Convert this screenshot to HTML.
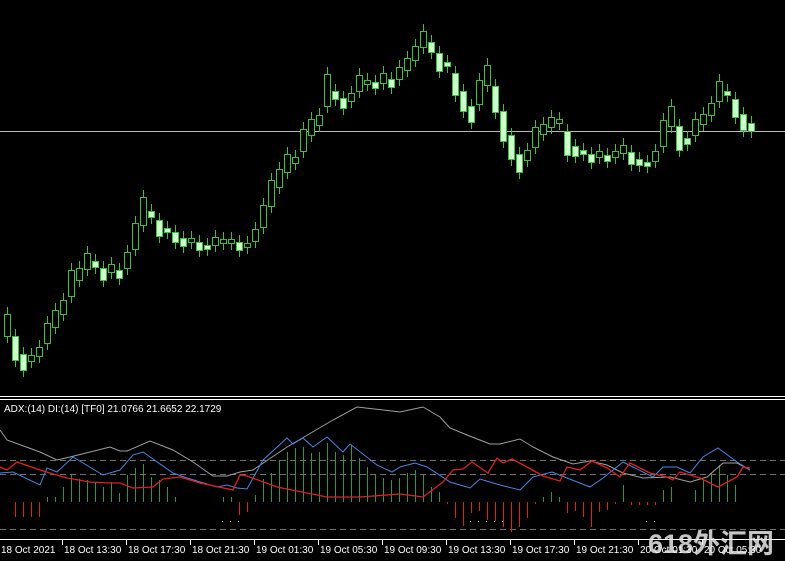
<!DOCTYPE html>
<html><head><meta charset="utf-8"><style>
html,body{margin:0;padding:0;background:#000;width:785px;height:561px;overflow:hidden}
svg{display:block}
text{font-family:"Liberation Sans",sans-serif;font-size:10px;fill:#fff}
</style></head><body>
<svg width="785" height="561" xmlns="http://www.w3.org/2000/svg">
<rect width="785" height="561" fill="#000"/>
<line x1="0" y1="131.5" x2="785" y2="131.5" stroke="#b8b8b8"/>
<path fill="none" stroke="#3fbf3f" d="M7.5,307V343M15.5,329V367M23.5,347V377M31.5,348V368M39.5,340V363M47.5,316V350M55.5,303V334M63.5,293V321M71.5,263V303M79.5,261V287M87.5,246V276M95.5,254V274M103.5,261V287M111.5,257V279M119.5,263V285M127.5,245V275M135.5,216V256M143.5,190V232M151.5,204V224M159.5,213V243M167.5,221V239M175.5,225V249M183.5,231V253M191.5,231V249M199.5,235V257M207.5,238V256M215.5,230V252M223.5,232V250M231.5,232V250M239.5,235V257M247.5,236V254M255.5,222V248M263.5,198V234M271.5,173V213M279.5,162V194M287.5,147V179M295.5,150V170M303.5,122V158M311.5,112V142M319.5,108V132M327.5,67V113M335.5,84V106M343.5,91V115M351.5,86V108M359.5,68V98M367.5,73V91M375.5,75V95M383.5,66V90M391.5,72V94M399.5,60V86M407.5,51V77M415.5,39V67M423.5,24V54M431.5,35V59M439.5,46V78M447.5,55V73M455.5,66V102M463.5,84V118M471.5,99V129M479.5,73V111M487.5,58V92M495.5,79V119M503.5,104V148M511.5,128V166M519.5,147V179M527.5,143V167M535.5,120V154M543.5,117V141M551.5,110V134M559.5,112V130M567.5,124V162M575.5,139V163M583.5,143V161M591.5,147V169M599.5,144V164M607.5,148V168M615.5,144V164M623.5,138V160M631.5,145V171M639.5,152V172M647.5,155V173M655.5,144V168M663.5,113V153M671.5,99V133M679.5,119V157M687.5,131V151M695.5,112V142M703.5,107V131M711.5,96V122M719.5,74V108M727.5,84V102M735.5,92V124M743.5,107V137M751.5,116V138"/>
<g fill="#000" stroke="#3fbf3f">
<rect x="4.5" y="314.5" width="6" height="22"/><rect x="28.5" y="355.5" width="6" height="6"/><rect x="36.5" y="347.5" width="6" height="9"/><rect x="44.5" y="323.5" width="6" height="20"/><rect x="52.5" y="310.5" width="6" height="17"/><rect x="60.5" y="300.5" width="6" height="14"/><rect x="68.5" y="270.5" width="6" height="26"/><rect x="76.5" y="268.5" width="6" height="12"/><rect x="84.5" y="253.5" width="6" height="16"/><rect x="108.5" y="264.5" width="6" height="8"/><rect x="124.5" y="252.5" width="6" height="16"/><rect x="132.5" y="223.5" width="6" height="26"/><rect x="140.5" y="197.5" width="6" height="28"/><rect x="188.5" y="238.5" width="6" height="4"/><rect x="212.5" y="237.5" width="6" height="8"/><rect x="220.5" y="239.5" width="6" height="4"/><rect x="228.5" y="239.5" width="6" height="4"/><rect x="244.5" y="243.5" width="6" height="4"/><rect x="252.5" y="229.5" width="6" height="12"/><rect x="260.5" y="205.5" width="6" height="22"/><rect x="268.5" y="180.5" width="6" height="26"/><rect x="276.5" y="169.5" width="6" height="18"/><rect x="284.5" y="154.5" width="6" height="18"/><rect x="292.5" y="157.5" width="6" height="6"/><rect x="300.5" y="129.5" width="6" height="22"/><rect x="308.5" y="119.5" width="6" height="16"/><rect x="316.5" y="115.5" width="6" height="10"/><rect x="324.5" y="74.5" width="6" height="32"/><rect x="348.5" y="93.5" width="6" height="8"/><rect x="356.5" y="75.5" width="6" height="16"/><rect x="364.5" y="80.5" width="6" height="4"/><rect x="380.5" y="73.5" width="6" height="10"/><rect x="396.5" y="67.5" width="6" height="12"/><rect x="404.5" y="58.5" width="6" height="12"/><rect x="412.5" y="46.5" width="6" height="14"/><rect x="420.5" y="31.5" width="6" height="16"/><rect x="476.5" y="80.5" width="6" height="24"/><rect x="484.5" y="65.5" width="6" height="20"/><rect x="524.5" y="150.5" width="6" height="10"/><rect x="532.5" y="127.5" width="6" height="20"/><rect x="540.5" y="124.5" width="6" height="10"/><rect x="548.5" y="117.5" width="6" height="10"/><rect x="556.5" y="119.5" width="6" height="4"/><rect x="596.5" y="151.5" width="6" height="6"/><rect x="612.5" y="151.5" width="6" height="6"/><rect x="620.5" y="145.5" width="6" height="8"/><rect x="652.5" y="151.5" width="6" height="10"/><rect x="660.5" y="120.5" width="6" height="26"/><rect x="668.5" y="106.5" width="6" height="20"/><rect x="692.5" y="119.5" width="6" height="16"/><rect x="700.5" y="114.5" width="6" height="10"/><rect x="708.5" y="103.5" width="6" height="12"/><rect x="716.5" y="81.5" width="6" height="20"/>
</g>
<g fill="#ccffcc" stroke="#3fbf3f">
<rect x="12.5" y="336.5" width="6" height="24"/><rect x="20.5" y="354.5" width="6" height="16"/><rect x="92.5" y="261.5" width="6" height="6"/><rect x="100.5" y="268.5" width="6" height="12"/><rect x="116.5" y="270.5" width="6" height="8"/><rect x="148.5" y="211.5" width="6" height="6"/><rect x="156.5" y="220.5" width="6" height="16"/><rect x="164.5" y="228.5" width="6" height="4"/><rect x="172.5" y="232.5" width="6" height="10"/><rect x="180.5" y="238.5" width="6" height="8"/><rect x="196.5" y="242.5" width="6" height="8"/><rect x="204.5" y="245.5" width="6" height="4"/><rect x="236.5" y="242.5" width="6" height="8"/><rect x="332.5" y="91.5" width="6" height="8"/><rect x="340.5" y="98.5" width="6" height="10"/><rect x="372.5" y="82.5" width="6" height="6"/><rect x="388.5" y="79.5" width="6" height="8"/><rect x="428.5" y="42.5" width="6" height="10"/><rect x="436.5" y="53.5" width="6" height="18"/><rect x="444.5" y="62.5" width="6" height="4"/><rect x="452.5" y="73.5" width="6" height="22"/><rect x="460.5" y="91.5" width="6" height="20"/><rect x="468.5" y="106.5" width="6" height="16"/><rect x="492.5" y="86.5" width="6" height="26"/><rect x="500.5" y="111.5" width="6" height="30"/><rect x="508.5" y="135.5" width="6" height="24"/><rect x="516.5" y="154.5" width="6" height="18"/><rect x="564.5" y="131.5" width="6" height="24"/><rect x="572.5" y="146.5" width="6" height="10"/><rect x="580.5" y="150.5" width="6" height="4"/><rect x="588.5" y="154.5" width="6" height="8"/><rect x="604.5" y="155.5" width="6" height="6"/><rect x="628.5" y="152.5" width="6" height="12"/><rect x="636.5" y="159.5" width="6" height="6"/><rect x="644.5" y="162.5" width="6" height="4"/><rect x="676.5" y="126.5" width="6" height="24"/><rect x="684.5" y="138.5" width="6" height="6"/><rect x="724.5" y="91.5" width="6" height="4"/><rect x="732.5" y="99.5" width="6" height="18"/><rect x="740.5" y="114.5" width="6" height="16"/><rect x="748.5" y="123.5" width="6" height="8"/>
</g>
<line x1="0" y1="396.5" x2="785" y2="396.5" stroke="#fff"/>
<line x1="0" y1="399.5" x2="785" y2="399.5" stroke="#fff"/>
<line x1="0" y1="539.5" x2="785" y2="539.5" stroke="#fff"/>
<g stroke="#707070" stroke-dasharray="6,4">
<line x1="0" y1="460.5" x2="785" y2="460.5"/>
<line x1="0" y1="474.5" x2="785" y2="474.5"/>
<line x1="0" y1="529.5" x2="785" y2="529.5"/>
</g>
<text x="4" y="412">ADX:(14) DI:(14) [TF0] 21.0766 21.6652 22.1729</text>
<path fill="none" stroke="#2f9a2f" shape-rendering="crispEdges" d="M47.5,502V497M55.5,502V497M63.5,502V487M71.5,502V475M79.5,502V479M87.5,502V480M95.5,502V483M103.5,502V487M111.5,502V482M119.5,502V493M127.5,502V475M135.5,502V468M143.5,502V464M151.5,502V477M159.5,502V480M167.5,502V487M175.5,502V497M223.5,502V497M231.5,502V497M255.5,502V495M263.5,502V479M271.5,502V473M279.5,502V460M287.5,502V452M295.5,502V448M303.5,502V447M311.5,502V453M319.5,502V452M327.5,502V443M335.5,502V452M343.5,502V455M351.5,502V445M359.5,502V458M367.5,502V467M375.5,502V475M383.5,502V478M391.5,502V480M399.5,502V478M407.5,502V473M415.5,502V470M423.5,502V475M431.5,502V487M439.5,502V492M543.5,502V497M551.5,502V492M559.5,502V497M623.5,502V485M663.5,502V490M671.5,502V487M695.5,502V490M703.5,502V480M711.5,502V473M719.5,502V465M727.5,502V475M735.5,502V485"/>
<path fill="none" stroke="#e02020" shape-rendering="crispEdges" d="M15.5,502V517M23.5,502V517M31.5,502V517M39.5,502V517M239.5,502V515M247.5,502V512M447.5,502V504M455.5,502V518M463.5,502V526M471.5,502V513M479.5,502V511M487.5,502V520M495.5,502V521M503.5,502V527M511.5,502V532M519.5,502V527M527.5,502V518M535.5,502V504M567.5,502V513M575.5,502V511M583.5,502V517M591.5,502V527M599.5,502V512M607.5,502V510M615.5,502V504M631.5,502V505M639.5,502V505M647.5,502V505M655.5,502V505"/>
<polyline fill="none" stroke="#a0a0a0" points="0,430 7,440 40,452 57,460 70,457 110,447 120,451 127,451 150,441 173,450 193,462 213,476 227,476 240,472 253,470 287,447 333,420 357,407 400,412 423,407 440,417 450,428 467,435 490,444 500,444 520,439 533,447 553,457 573,464 590,461 607,465 623,473 643,478 670,477 690,482 707,477 723,463 737,463 750,470"/>
<polyline fill="none" stroke="#4a86e8" points="0,473 13,472 40,485 47,468 57,472 73,457 103,475 120,470 133,455 143,452 173,473 187,478 217,487 227,485 237,488 247,489 263,460 287,438 293,444 303,438 313,447 327,437 343,452 350,444 377,465 392,472 400,467 415,463 427,467 450,482 470,488 480,479 500,485 520,490 533,477 552,472 567,478 590,487 603,478 623,462 633,467 653,477 663,467 677,467 690,473 703,457 718,448 737,462 750,470"/>
<polyline fill="none" stroke="#e02020" stroke-width="1.3" points="0,467 7,470 17,462 40,470 67,478 90,482 110,483 120,483 133,488 153,487 163,479 180,477 200,483 233,490 240,475 247,476 277,487 327,497 360,497 400,494 423,497 443,482 453,470 463,469 472,462 488,473 497,458 503,463 512,459 527,467 543,476 560,481 567,467 580,470 592,461 607,468 620,477 630,463 650,473 667,477 673,480 680,472 700,478 718,487 737,477 743,467 750,468"/>
<g fill="#fff"><rect x="222" y="521" width="1" height="1"/><rect x="230" y="521" width="1" height="1"/><rect x="238" y="521" width="1" height="1"/>
<rect x="470" y="521" width="1" height="1"/><rect x="478" y="521" width="1" height="1"/><rect x="486" y="521" width="1" height="1"/><rect x="494" y="521" width="1" height="1"/><rect x="502" y="521" width="1" height="1"/><rect x="646" y="521" width="1" height="1"/><rect x="654" y="521" width="1" height="1"/></g>
<path stroke="#fff" d="M62.5,540V545M126.5,540V545M190.5,540V545M254.5,540V545M318.5,540V545M382.5,540V545M446.5,540V545M510.5,540V545M574.5,540V545M638.5,540V545M702.5,540V545"/>
<text x="1" y="553">18 Oct 2021</text>
<text x="64" y="553">18 Oct 13:30</text>
<text x="128" y="553">18 Oct 17:30</text>
<text x="192" y="553">18 Oct 21:30</text>
<text x="256" y="553">19 Oct 01:30</text>
<text x="320" y="553">19 Oct 05:30</text>
<text x="384" y="553">19 Oct 09:30</text>
<text x="448" y="553">19 Oct 13:30</text>
<text x="512" y="553">19 Oct 17:30</text>
<text x="576" y="553">19 Oct 21:30</text>
<text x="640" y="553">20 Oct 01:30</text>
<text x="704" y="553">20 Oct 05:30</text>
<text x="648" y="553" style="font-size:27px;font-family:'Liberation Sans','Noto Sans CJK SC',sans-serif;font-weight:bold;fill:#e8e8e8;fill-opacity:0.85">618外汇网</text>
</svg>
</body></html>
